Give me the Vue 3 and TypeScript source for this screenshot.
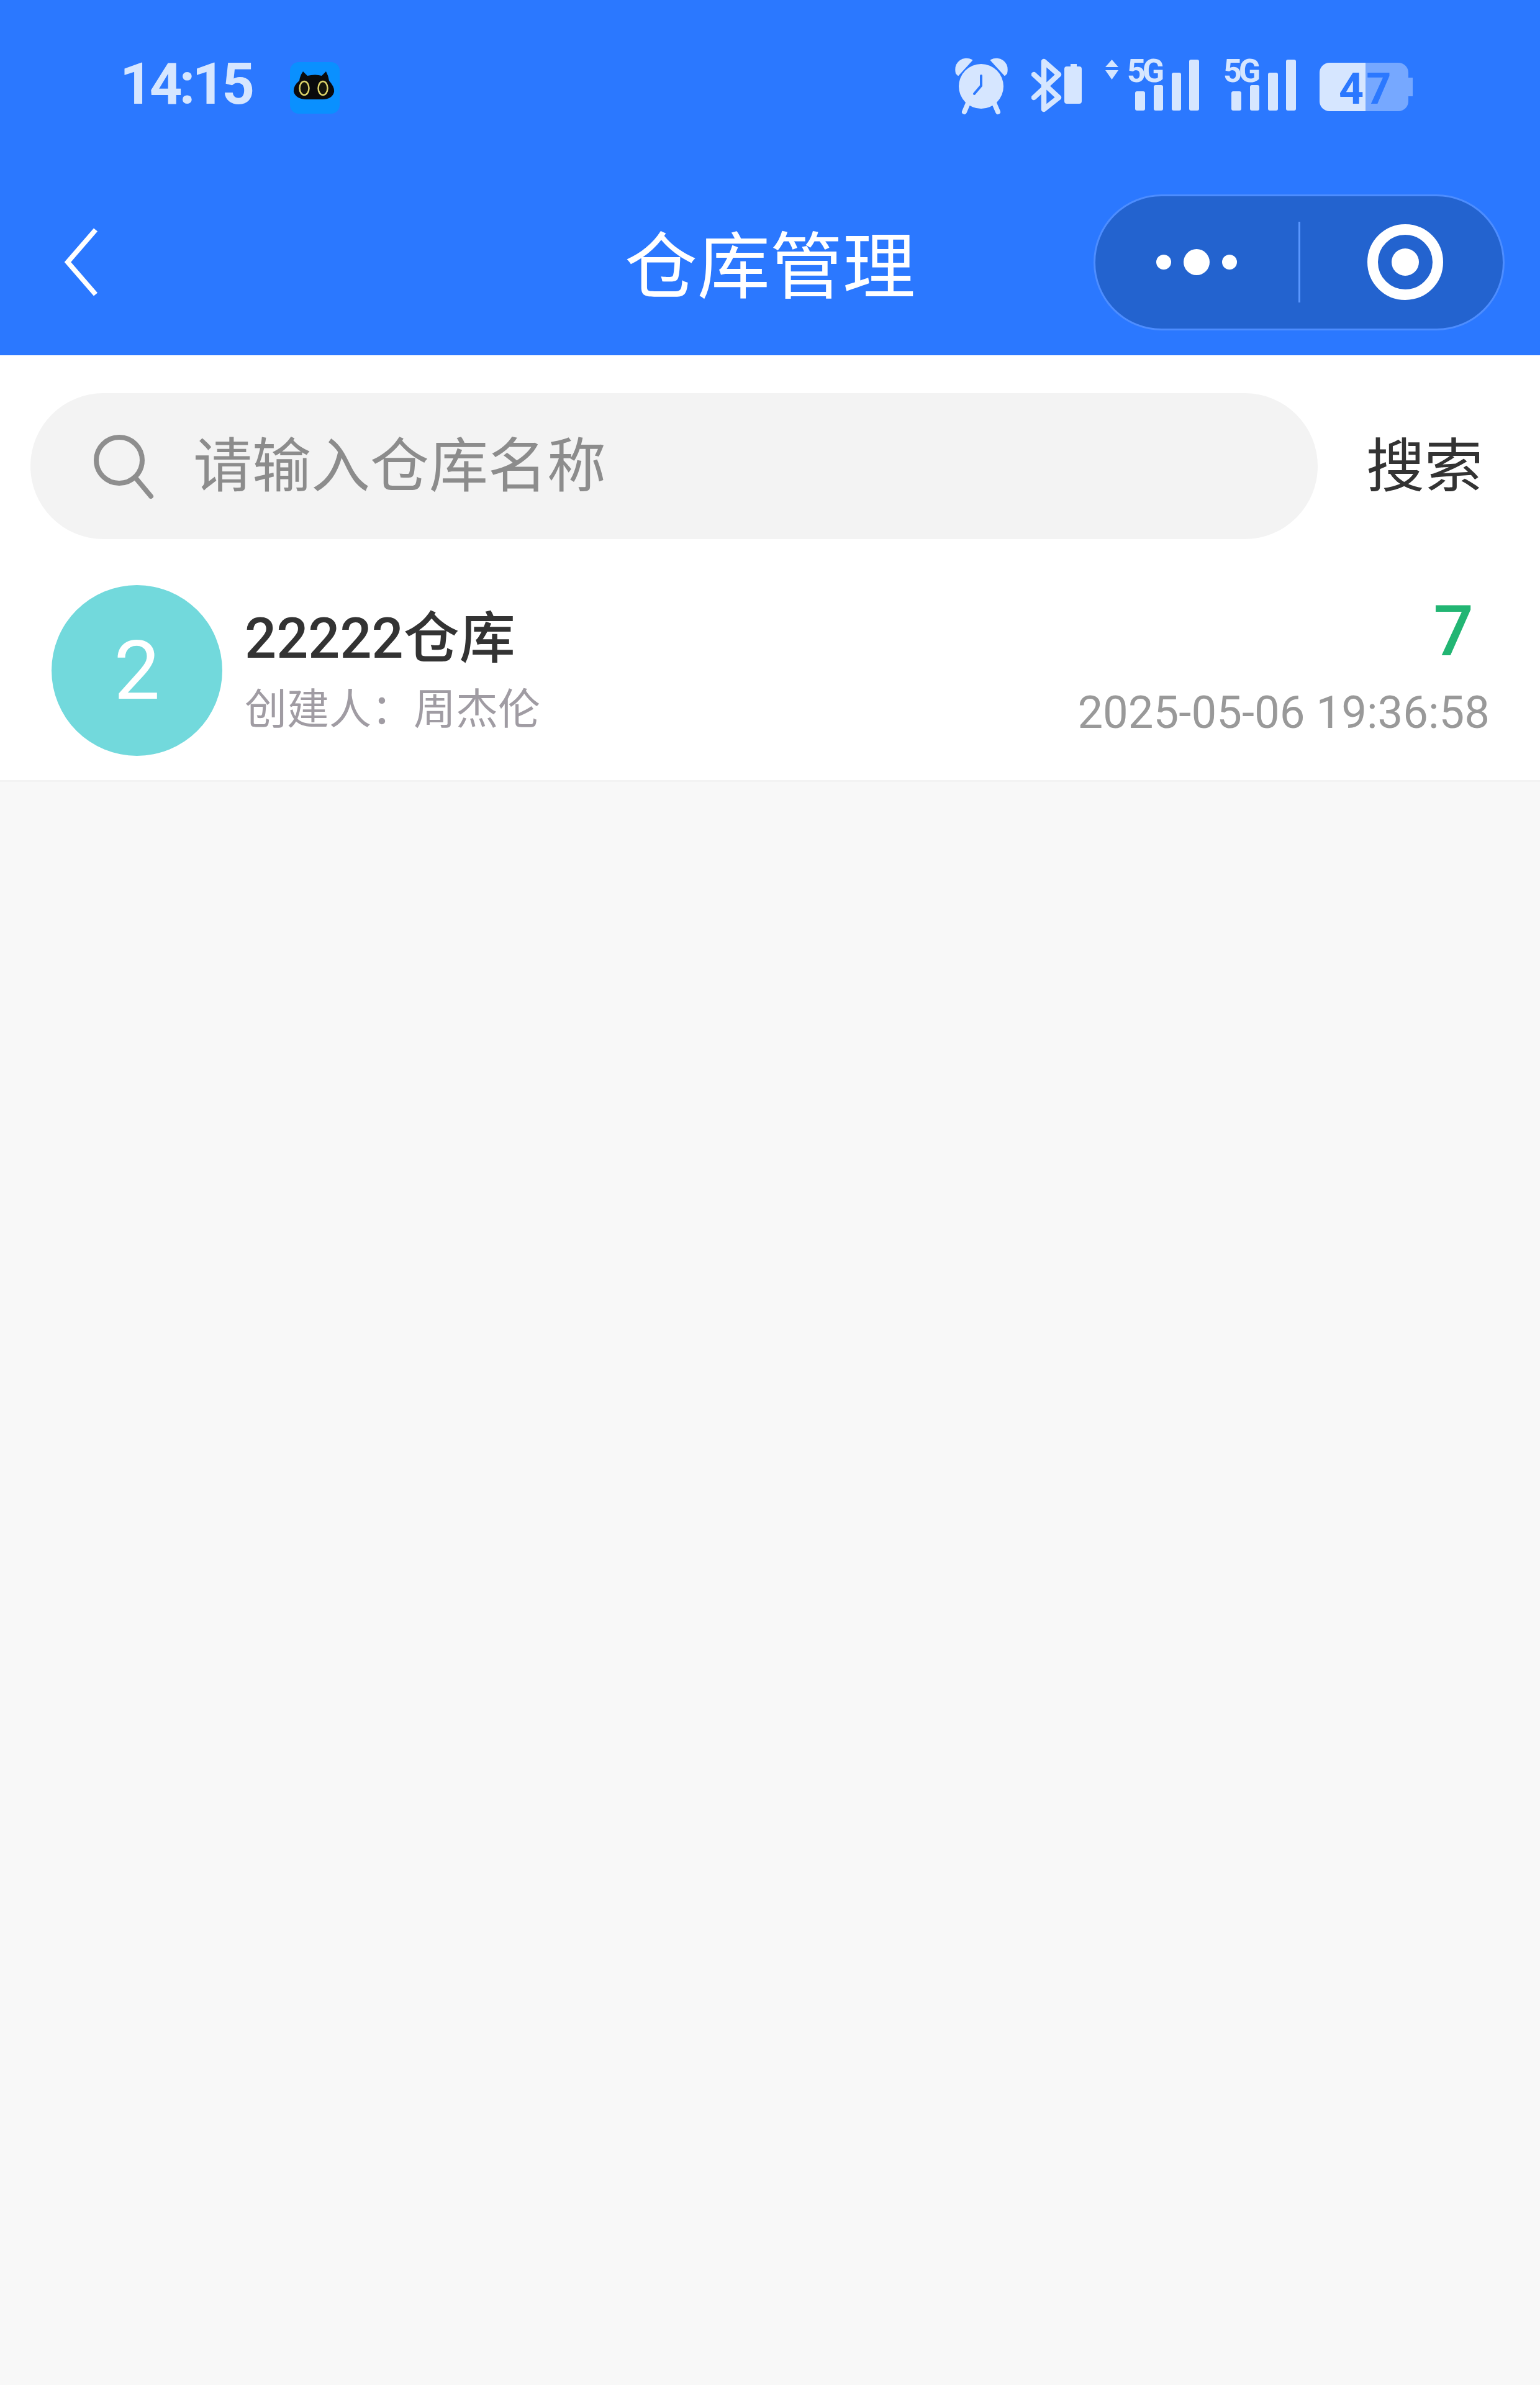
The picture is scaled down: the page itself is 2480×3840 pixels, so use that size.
<script setup lang="ts">
interface Warehouse {
  id: number;
  name: string;
  creator: string;
  count: number;
  createdAt: string;
}

const warehouses: Warehouse[] = [
  { id: 1, name: "22222仓库", creator: "周杰伦", count: 7, createdAt: "2025-05-06 19:36:58" },
];
</script>

<template>
  <div class="page">
    <header class="header">
      <div class="status">
        <span class="time">14:15</span>
        <svg class="cat" width="80" height="83" viewBox="0 0 80 83">
          <rect width="80" height="83" rx="14" fill="#0a90ff" />
          <path d="M21 15L28 22Q40 19 51 22L58 15Q62 22 63 30Q72 40 71 48Q68 60 52 60H27Q10 60 6 48Q5 38 15 30Q16 22 21 15Z" fill="#0a0a0c" />
          <ellipse cx="23" cy="42" rx="7.5" ry="11" fill="#14140c" stroke="#dcd36a" stroke-width="2.5" />
          <ellipse cx="53" cy="42" rx="7.5" ry="11" fill="#14140c" stroke="#dcd36a" stroke-width="2.5" />
        </svg>
        <div class="status-icons">
          <svg width="85" height="100" viewBox="0 0 85 100">
            <circle cx="42" cy="49" r="36" fill="#d6e6ff" />
            <path d="M2 28C-2 10 14 0 27 7L5 31Z" fill="#d6e6ff" stroke="#d6e6ff" stroke-width="2" stroke-linejoin="round" />
            <path d="M83 28C87 10 71 0 58 7L80 31Z" fill="#d6e6ff" stroke="#d6e6ff" stroke-width="2" stroke-linejoin="round" />
            <path d="M21 76L15 90M63 76L69 90" stroke="#d6e6ff" stroke-width="8" stroke-linecap="round" />
            <path d="M42 32V48L31 61" fill="none" stroke="#2b78ff" stroke-width="4" stroke-linecap="round" />
          </svg>
          <svg width="81" height="100" viewBox="0 0 81 100">
            <path d="M4 30L44 67L20 86V9L44 30L4 67" fill="none" stroke="#d6e6ff" stroke-width="8.5" stroke-linejoin="round" stroke-linecap="round" />
            <path d="M63 13H73V17H77Q81 17 81 21V73Q81 77 77 77H57Q53 77 53 73V21Q53 17 57 17H63Z" fill="#d6e6ff" />
          </svg>
          <svg class="net" width="151" height="120" viewBox="0 -20 151 120">
            <path d="M0 18L10.5 6L21 18ZM0 23H21L10.5 38Z" fill="#d6e6ff" />
            <text class="net-label" x="35" y="42">5G</text>
            <rect x="48" y="57" width="16" height="31" rx="3" fill="#d6e6ff" />
            <rect x="78" y="47" width="15" height="41" rx="3" fill="#d6e6ff" />
            <rect x="107" y="27" width="15" height="61" rx="3" fill="#d6e6ff" />
            <rect x="135" y="6" width="16" height="82" rx="3" fill="#d6e6ff" />
          </svg>
          <svg class="net" width="118" height="120" viewBox="0 -20 118 120">
            <text class="net-label" x="1" y="42">5G</text>
            <rect x="14" y="57" width="16" height="31" rx="3" fill="#d6e6ff" />
            <rect x="44" y="47" width="15" height="41" rx="3" fill="#d6e6ff" />
            <rect x="73" y="27" width="16" height="61" rx="3" fill="#d6e6ff" />
            <rect x="102" y="6" width="16" height="82" rx="3" fill="#d6e6ff" />
          </svg>
          <svg width="150" height="100" viewBox="0 0 150 100">
            <path d="M74 11H127A16 16 0 0 1 143 27V35H150V65H143V73A16 16 0 0 1 127 89H74Z" fill="#76a8ff" />
            <path d="M16 11H74V89H16A16 16 0 0 1 0 73V27A16 16 0 0 1 16 11Z" fill="#d6e6ff" />
            <text class="battery-label" x="31" y="77">47</text>
          </svg>
        </div>
      </div>
      <div class="nav">
        <svg class="back" width="60" height="110" viewBox="0 0 60 110">
          <path d="M52 3L7 55L52 107" fill="none" stroke="#fff" stroke-width="8" />
        </svg>
        <h1 class="title">仓库管理</h1>
        <div class="capsule">
          <div class="capsule-part">
            <span class="dot"></span>
            <span class="dot dot-big"></span>
            <span class="dot"></span>
          </div>
          <div class="capsule-line"></div>
          <div class="capsule-part">
            <span class="target"><span class="target-dot"></span></span>
          </div>
        </div>
      </div>
    </header>

    <main class="content">
      <section class="search-row">
        <div class="search-box">
          <svg class="search-icon" width="100" height="104" viewBox="0 0 100 104">
            <circle cx="43" cy="42" r="37" fill="none" stroke="#8e8e8e" stroke-width="8" />
            <path d="M69 70L94 100" stroke="#8e8e8e" stroke-width="8" stroke-linecap="round" />
          </svg>
          <span class="placeholder">请输入仓库名称</span>
        </div>
        <span class="search-btn">搜索</span>
      </section>

      <article v-for="item in warehouses" :key="item.id" class="item">
        <div class="avatar">{{ item.name.charAt(0) }}</div>
        <div class="info">
          <div class="name">{{ item.name }}</div>
          <div class="creator">创建人：{{ item.creator }}</div>
        </div>
        <div class="meta">
          <div class="count">{{ item.count }}</div>
          <div class="date">{{ item.createdAt }}</div>
        </div>
      </article>
    </main>
  </div>
</template>

<style>
html,
body {
  margin: 0;
  background: #f8f8f8;
}
</style>

<style scoped>
.page {
  width: 2480px;
  min-height: 3840px;
  background: #f8f8f8;
  font-family: Roboto, "Noto Sans CJK SC", sans-serif;
  color: #333;
}

.header {
  height: 572px;
  background: #2b78ff;
}

.status {
  display: flex;
  align-items: flex-start;
  height: 272px;
  box-sizing: border-box;
  padding: 90px 205px 0 193px;
}

.time {
  width: 214px;
  font-size: 92px;
  line-height: 92px;
  font-weight: 700;
  letter-spacing: -5px;
  color: #d6e6ff;
}

.cat {
  margin: 10px 0 0 60px;
}

.status-icons {
  display: flex;
  margin-left: auto;
}

.status-icons svg {
  display: block;
  margin-left: 38px;
}

.status-icons .net {
  margin-top: -20px;
}

.net-label {
  font-family: Roboto, sans-serif;
  font-size: 52px;
  font-weight: 700;
  letter-spacing: -5px;
  fill: #d6e6ff;
}

.battery-label {
  font-family: Roboto, sans-serif;
  font-size: 70px;
  font-weight: 700;
  letter-spacing: 4px;
  fill: #2b78ff;
}

.nav {
  display: grid;
  grid-template-columns: 1fr auto 1fr;
  align-items: center;
  height: 300px;
  padding: 0 57px;
}

.back {
  display: block;
  margin-left: 45px;
}

.title {
  margin: 18px 0 0;
  font-size: 117px;
  line-height: 150px;
  font-weight: 400;
  color: #fff;
}

.capsule {
  justify-self: end;
  display: flex;
  align-items: center;
  width: 662px;
  height: 219px;
  box-sizing: border-box;
  background: #2363cf;
  border: 3px solid #4d8dff;
  border-radius: 110px;
}

.capsule-part {
  flex: 1;
  display: flex;
  justify-content: center;
  align-items: center;
  gap: 20px;
}

.capsule-line {
  width: 3px;
  height: 130px;
  background: #5a97ff;
}

.dot {
  width: 24px;
  height: 24px;
  border-radius: 50%;
  background: #fff;
}

.dot-big {
  width: 42px;
  height: 42px;
}

.target {
  display: flex;
  justify-content: center;
  align-items: center;
  width: 122px;
  height: 122px;
  margin-left: 12px;
  box-sizing: border-box;
  border: 17px solid #fff;
  border-radius: 50%;
}

.target-dot {
  width: 44px;
  height: 44px;
  border-radius: 50%;
  background: #fff;
}

.content {
  background: #fff;
  border-bottom: 3px solid #f3f3f3;
}

.search-row {
  display: flex;
  align-items: center;
  padding: 61px 0 0 49px;
}

.search-box {
  display: flex;
  align-items: center;
  width: 2073px;
  height: 235px;
  box-sizing: border-box;
  padding-left: 100px;
  background: #f3f3f3;
  border-radius: 118px;
}

.search-icon {
  display: block;
  margin-right: 62px;
}

.placeholder {
  margin-bottom: 16px;
  font-size: 95px;
  font-weight: 400;
  color: #8c8c8c;
}

.search-btn {
  margin: 0 0 16px 78px;
  font-size: 94px;
  color: #333;
}

.item {
  display: flex;
  align-items: flex-start;
  padding: 74px 81px 36px 83px;
}

.avatar {
  display: flex;
  justify-content: center;
  align-items: center;
  width: 275px;
  height: 275px;
  border-radius: 50%;
  background: #72d9dc;
  color: #fff;
  font-size: 132px;
  font-weight: 400;
}

.info {
  flex: 1;
  margin-left: 36px;
  padding-top: 30px;
}

.name {
  font-size: 90px;
  line-height: 113px;
  font-weight: 500;
  color: #333;
}

.creator {
  font-size: 68px;
  line-height: 117px;
  color: #a09ca3;
}

.meta {
  padding-top: 14px;
  text-align: right;
}

.count {
  margin-right: 26px;
  font-size: 114px;
  line-height: 120px;
  font-weight: 500;
  color: #22b573;
}

.date {
  font-size: 72.5px;
  line-height: 144px;
  font-weight: 400;
  color: #999;
}
</style>
